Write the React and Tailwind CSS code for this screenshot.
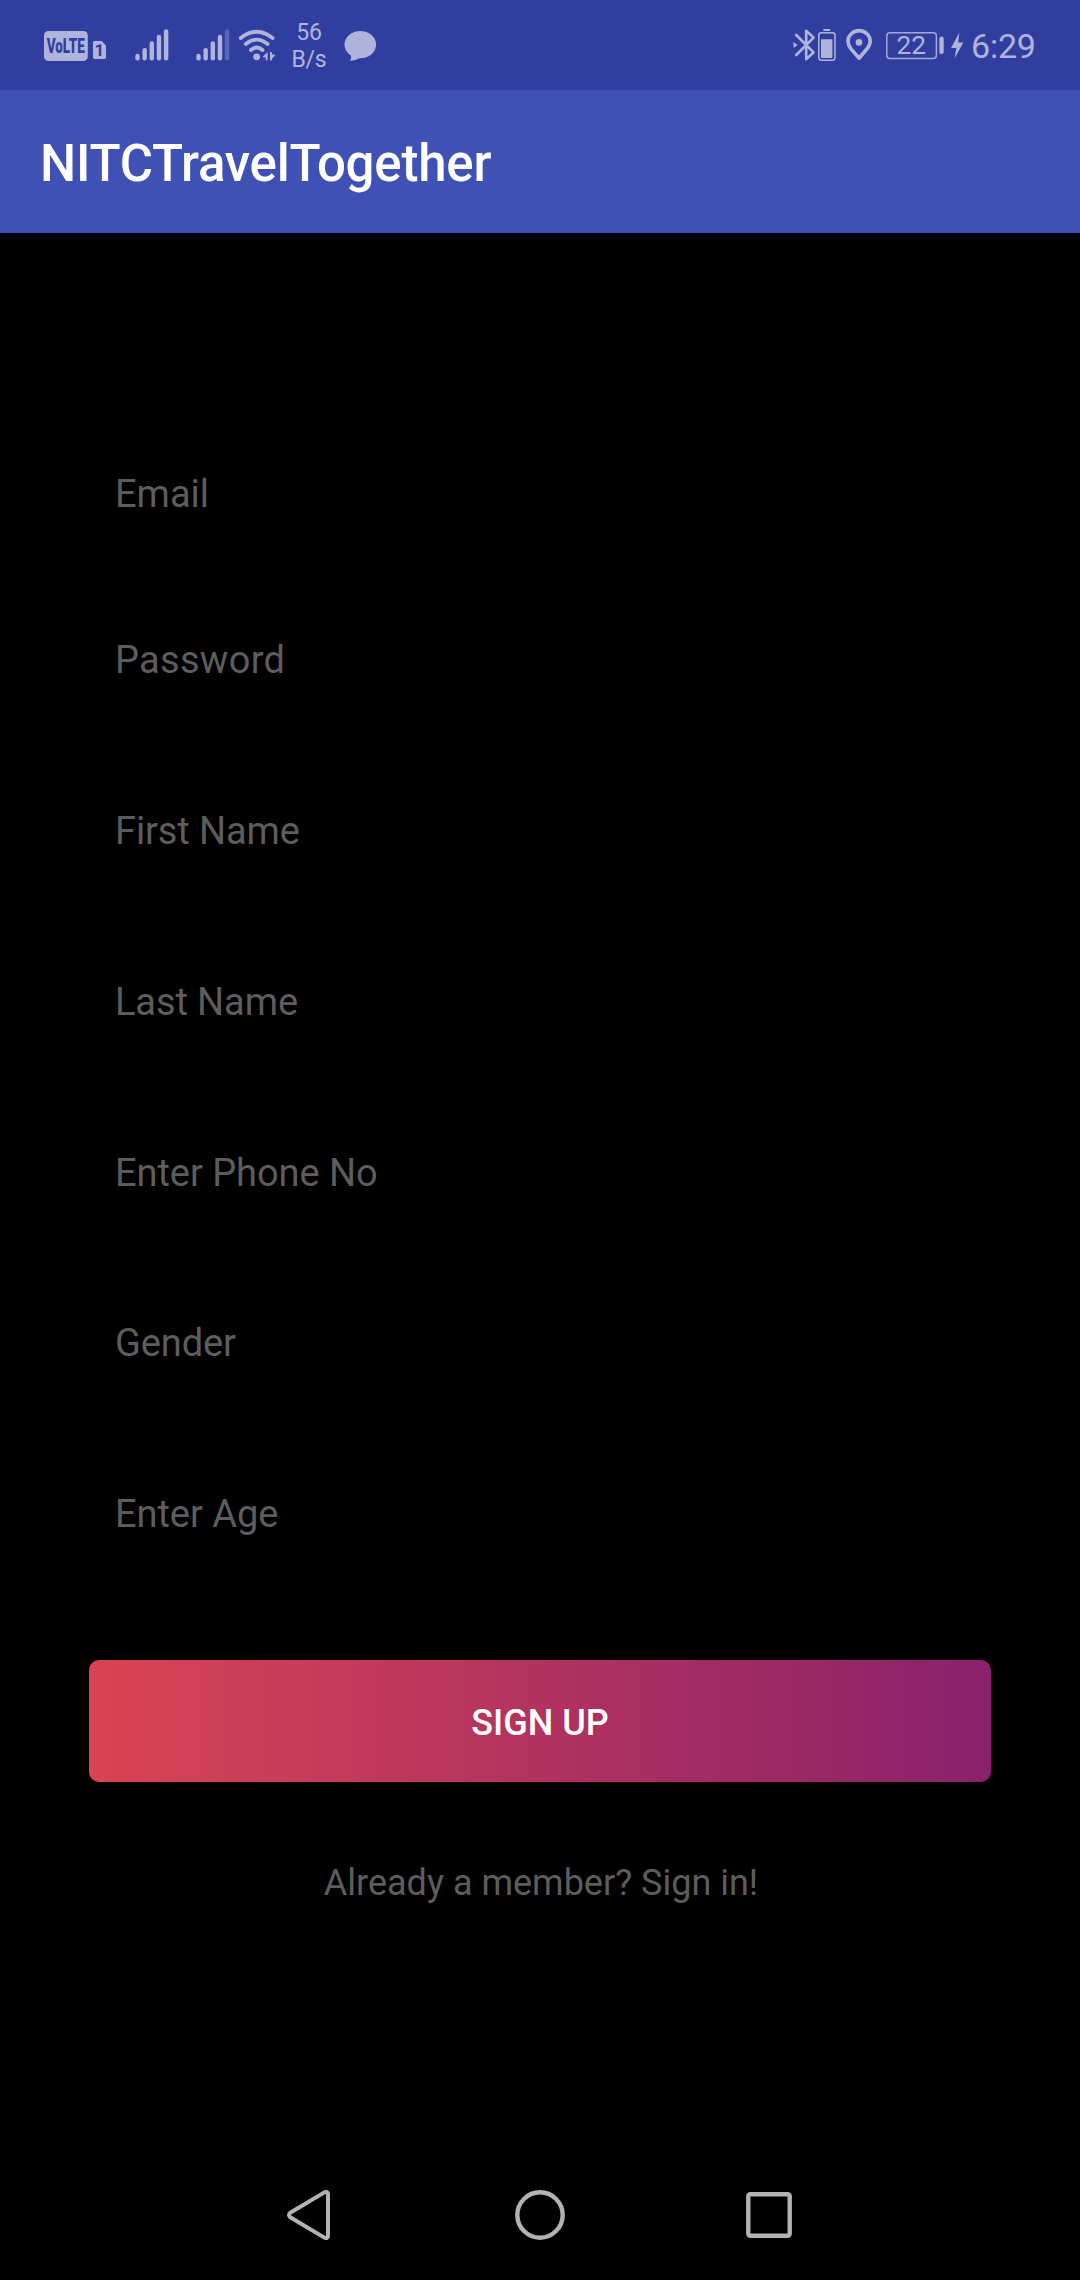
import React from "react";

const fields = [
  { label: "Email", style: "mt-[239px]" },
  { label: "Password", style: "mt-[122px] tracking-[0.3px]" },
  { label: "First Name", style: "mt-[127px] tracking-[-0.1px]" },
  { label: "Last Name", style: "mt-[127px] tracking-[-0.1px]" },
  { label: "Enter Phone No", style: "mt-[127px] tracking-[-0.05px]" },
  { label: "Gender", style: "mt-[126px] tracking-[-0.1px]" },
  { label: "Enter Age", style: "mt-[127px] tracking-[-0.05px]" },
];

function Glyph({ x, w, className = "", children }) {
  return (
    <svg
      className={`shrink-0 ${className}`}
      width={w}
      height="90"
      viewBox={`${x} 0 ${w} 90`}
      fill="currentColor"
      fontFamily="Roboto, sans-serif"
    >
      {children}
    </svg>
  );
}

const barTops = [53.8, 48, 41.3, 34.8, 29.3];

function Signal({ className, dimLast }) {
  return (
    <Glyph x={0} w={34} className={className}>
      {barTops.map((top, i) => (
        <rect
          key={top}
          x={0.3 + i * 7.15}
          y={top}
          width="4.4"
          height={60.6 - top}
          rx="2.1"
          opacity={dimLast && i === 4 ? 0.33 : 1}
        />
      ))}
    </Glyph>
  );
}

function StatusBar() {
  return (
    <div className="flex h-[90px] items-start bg-[#303f9f] pl-[44px] text-[#b0b4dc]">
      <Glyph x={44} w={44}>
        <rect x="44" y="31" width="43.8" height="30" rx="4.5" />
        <text transform="translate(46.7 52.6) scale(0.69 1)" fontSize="19.5" fontWeight="900" fill="#303f9f">
          VoLTE
        </text>
      </Glyph>
      <Glyph x={92} w={14} className="ml-1">
        <path d="M94.5 41H101.5L106 45.5V57.3Q106 59 104.3 59H94.7Q93 59 93 57.3V42.5Q93 41 94.5 41Z" />
        <text x="94.6" y="56" fontSize="17" fontWeight="700" fill="#303f9f">
          1
        </text>
      </Glyph>
      <Signal className="ml-[29px]" />
      <Signal className="ml-[27px]" dimLast />
      <Glyph x={238} w={39} className="ml-[8px]">
        <g fill="none" stroke="currentColor" strokeWidth="3.8" strokeLinecap="round">
          <path d="M240.8 38Q256.7 25.6 272.6 38" />
          <path d="M245.8 44Q256.7 35.2 267.6 44" />
          <path d="M250.9 50Q256.7 44.8 262.5 50" />
        </g>
        <circle cx="256.7" cy="56.8" r="3.4" />
        <path d="M262.4 57 267.6 52V60.3H265.8V57.6Z" />
        <path d="M270 52H271.8V54.5H275.4L271.8 59V60.6H270Z" />
      </Glyph>
      <div className="ml-[14px] mt-[19px] w-[36px] text-center text-[23px] leading-[27px] tracking-[-0.3px]">
        56
        <br />
        B/s
      </div>
      <Glyph x={343} w={34} className="ml-[16px]">
        <ellipse cx="360.3" cy="44.6" rx="15.8" ry="13.6" />
        <path d="M350 53Q352.5 57.5 349.8 61Q356 60.5 361 57.5Z" />
      </Glyph>
      <Glyph x={792} w={24} className="ml-[415px]">
        <path
          d="M796.2 35 813.6 52.4 806.2 59.2V30.8L813.6 37.6 796.2 55"
          fill="none"
          stroke="currentColor"
          strokeWidth="2.6"
          strokeLinejoin="round"
          strokeLinecap="round"
        />
        <path d="M793.5 42 797.6 45 793.5 48Z" />
      </Glyph>
      <Glyph x={817} w={20} className="ml-px">
        <rect x="823.3" y="29" width="6.8" height="2" rx="0.5" />
        <rect x="818.8" y="32.8" width="16.2" height="27.4" rx="2.6" fill="none" stroke="currentColor" strokeWidth="1.5" />
        <rect x="821" y="39.3" width="11.4" height="18.6" rx="1" />
      </Glyph>
      <Glyph x={845} w={28} className="ml-2">
        <path
          d="M859 58.2 851 48.8C849 46.2 848 44 848 41.2A11.1 10.6 0 0 1 870.2 41.2C870.2 44 869 46.2 867.1 48.8Z"
          fill="none"
          stroke="currentColor"
          strokeWidth="3.6"
          strokeLinejoin="round"
        />
        <circle cx="859" cy="42.4" r="3.3" />
      </Glyph>
      <Glyph x={885} w={60} className="ml-3">
        <rect x="886.8" y="32.8" width="49.6" height="25.6" rx="3.2" fill="none" stroke="currentColor" strokeWidth="1.5" opacity="0.9" />
        <rect x="939.4" y="36.6" width="4.3" height="17.4" rx="2" />
        <text x="896.6" y="54.3" fontSize="26.3">
          22
        </text>
      </Glyph>
      <Glyph x={950} w={14} className="ml-[5px]">
        <path d="M959.4 32.6 951 48H956.4L954.6 58.4 963.2 42.6H958.2Z" />
      </Glyph>
      <div className="ml-[7px] mt-[26px] text-[34px] leading-[40px] tracking-[-0.2px]">6:29</div>
    </div>
  );
}

function NavigationBar() {
  return (
    <nav className="mt-auto mb-[40px] flex h-[50px] items-center pl-[287px] text-[#b3b3b3]">
      <svg width="43" height="50" viewBox="0 0 43 50" fill="none" stroke="currentColor" strokeWidth="4" strokeLinejoin="round">
        <path d="M3.2 22.8 37.4 2.4Q41 1 41 4V46Q41 49 37.4 47.6L3.2 27.2Q0.9 25 3.2 22.8Z" />
      </svg>
      <svg className="ml-[185px]" width="50" height="50" viewBox="0 0 50 50" fill="none" stroke="currentColor" strokeWidth="4.4">
        <circle cx="25" cy="25" r="22.7" />
      </svg>
      <svg className="ml-[181px]" width="46" height="46" viewBox="0 0 46 46" fill="none" stroke="currentColor" strokeWidth="4.4">
        <rect x="2.3" y="2.3" width="41.4" height="41.4" rx="2" />
      </svg>
    </nav>
  );
}

export default function App() {
  return (
    <div className="flex h-[2280px] w-[1080px] flex-col overflow-hidden bg-black font-['Roboto',sans-serif]">
      <StatusBar />
      <header className="h-[143px] bg-[#3f51b5] pl-[40px] pt-[44px]">
        <h1 className="text-[51px] leading-[59px] font-medium tracking-[-0.22px] text-white">NITCTravelTogether</h1>
      </header>
      <main className="flex flex-col text-[#5d5d5d]">
        {fields.map((f) => (
          <label key={f.label} className={`ml-[115px] text-[38px] leading-[44px] ${f.style}`}>
            {f.label}
          </label>
        ))}
        <button className="mx-[89px] mt-[124px] flex h-[122px] items-start justify-center rounded-[10px] bg-[linear-gradient(90deg,#da4453,#89216b)] pt-[42px] text-[36px] leading-[42px] font-medium text-white">
          SIGN UP
        </button>
        <p className="mt-[80px] pl-[2px] text-center text-[36px] leading-[42px]">Already a member? Sign in!</p>
      </main>
      <NavigationBar />
    </div>
  );
}
